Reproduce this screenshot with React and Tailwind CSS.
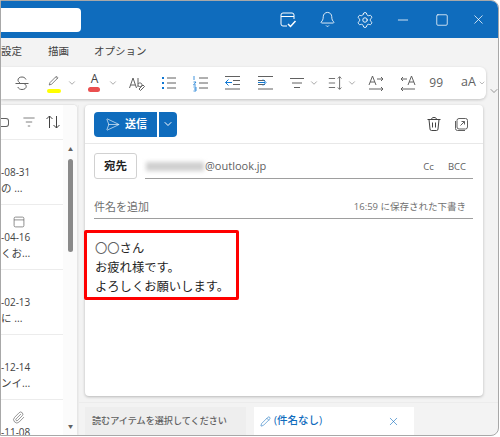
import { Bell, Settings, Minus, Square, X, ChevronDown, Paperclip, Pencil, SendHorizontal } from "lucide-react"

const Ico = ({ children, size = 20, color = "#616161", sw = 1 }) => (
  <svg width={size} height={size} viewBox="0 0 20 20" fill="none" stroke={color} strokeWidth={sw}>
    {children}
  </svg>
)

const Chev = () => <ChevronDown size={10} color="#757575" strokeWidth={1.5} />

const listItems = [
  { date: "-08-31", sub: "の ..." },
  { date: "-04-16", sub: "くお...", icon: "cal" },
  { date: "-02-13", sub: "に ..." },
  { date: "-12-14", sub: "ンイ..." },
  { date: "-11-08", icon: "clip" },
]

const Ribbon = () => (
  <div className="flex h-[32px] w-[485px] items-center rounded-r-md bg-white shadow-[0_1px_3px_rgba(0,0,0,0.2)]">
    <div className="ml-[11px] flex w-[20px] justify-center">
      <Ico>
        <path d="M14 6.5C13 4.5 11.5 4 10 4 7.5 4 6 5.3 6 7c0 1 .5 2 2 3M3.5 10.5h13M12 10.5c1.5.8 2.2 1.7 2.2 3 0 1.8-1.8 3-4.2 3-2 0-3.5-.8-4.2-2.5" />
      </Ico>
    </div>
    <div className="ml-[12px] flex w-[20px] flex-col items-center">
      <Ico size={16}>
        <path d="M5 12l-1 3 3-1 8-8-2-2zM12 5l2 2" />
      </Ico>
      <div className="h-[4px] w-[14px] rounded-sm bg-[#ffff00]" />
    </div>
    <div className="ml-[2px] flex w-[14px] justify-center"><Chev /></div>
    <div className="ml-[9px] flex w-[14px] flex-col items-center">
      <span className="text-[12px] leading-[12px] text-[#424242]">A</span>
      <div className="mt-[2px] h-[5px] w-[12px] rounded-sm bg-[#ea4f4f]" />
    </div>
    <div className="ml-[5px] flex w-[14px] justify-center"><Chev /></div>
    <div className="ml-[7px] flex w-[20px] justify-center">
      <Ico>
        <path d="M2.5 15L6 5l3.5 10M3.8 12h4.4M11 5v9M11 11c.5-1.5 4-1.5 4 .8 0 2-3 2.5-4 .7" />
        <path d="M12 16l4-4 1.5 1.5-4 4z" />
      </Ico>
    </div>
    <div className="ml-[12px] flex w-[20px] justify-center">
      <Ico>
        <path d="M8 5h9M8 10h9M8 15h9" stroke="#616161" />
        <path d="M3 5h2M3 10h2M3 15h2" stroke="#0f78d4" strokeWidth="2" />
      </Ico>
    </div>
    <div className="ml-[12px] flex w-[20px] justify-center">
      <Ico>
        <path d="M8 5h9M8 10h9M8 15h9" />
        <path d="M3 3v4M2.5 9h2.5l-2.5 3h2.5M2.5 14h2.5v4h-2.5M3 16h2" stroke="#0f78d4" strokeWidth=".8" />
      </Ico>
    </div>
    <div className="ml-[12px] flex w-[20px] justify-center">
      <Ico>
        <path d="M2 3.5h15M10 7.5h7M10 11.5h7M2 16h15" />
        <path d="M9 9.5H2.5M5.5 6.5l-3 3 3 3" stroke="#0f78d4" />
      </Ico>
    </div>
    <div className="ml-[12px] flex w-[20px] justify-center">
      <Ico>
        <path d="M3 3.5h15M3 7.5h7M3 11.5h7M3 16h15" />
        <path d="M3 9.5h7M8 6.5l3 3-3 3" stroke="#0f78d4" />
      </Ico>
    </div>
    <div className="ml-[12px] flex w-[20px] justify-center">
      <Ico>
        <path d="M3 5.5h14M5 10h10M7 14.5h6" />
      </Ico>
    </div>
    <div className="ml-[1px] flex w-[14px] justify-center"><Chev /></div>
    <div className="ml-[6px] flex w-[18px] justify-center">
      <Ico>
        <path d="M2 5h7M2 10h7M2 15h7M14 3v14M12 5l2-2 2 2M12 15l2 2 2-2" />
      </Ico>
    </div>
    <div className="flex w-[14px] justify-center"><Chev /></div>
    <div className="ml-[7px] flex w-[20px] justify-center">
      <Ico>
        <path d="M3 12l3.5-9L10 12M4.2 9h4.6M11 6h6M15 4l2 2-2 2M3 16h14M15 14l2 2-2 2" />
      </Ico>
    </div>
    <div className="ml-[12px] flex w-[20px] justify-center">
      <Ico>
        <path d="M10 12l3.5-9 3.5 9M11.2 9h4.6M3 6h6M5 4L3 6l2 2M3 16h14M5 14l-2 2 2 2" />
      </Ico>
    </div>
    <div className="ml-[9px] flex w-[20px] justify-center text-[12px] text-[#616161]">99</div>
    <div className="ml-[13px] flex w-[20px] justify-center text-[12.5px] text-[#616161]">aA</div>
    <div className="flex w-[8px] justify-center"><Chev /></div>
  </div>
)

const App = () => {
  return (
    <div className="relative flex h-[436px] w-[499px] flex-col overflow-hidden rounded-r-lg border border-[#a8a8a8] bg-[#f3f3f3] font-['Open_Sans','Noto_Sans_CJK_JP',sans-serif]">
      <div className="flex h-[37px] shrink-0 items-center bg-[#0f6cbd]">
        <div className="h-[24px] w-[80px] rounded-r bg-white" />
        <div className="ml-[197px] flex items-center">
          <svg width="20" height="20" viewBox="0 0 20 20" fill="none" stroke="#fff" strokeWidth="1">
            <path d="M9 16H5a2 2 0 0 1-2-2V5a2 2 0 0 1 2-2h9a2 2 0 0 1 2 2v4M3 6.5h13" />
            <path d="M10 14l2.5 2.5L17.5 11" strokeWidth="1.5" />
          </svg>
          <div className="ml-[21px]"><Bell size={17} color="#fff" strokeWidth={1.2} /></div>
          <div className="ml-[20px]"><Settings size={18} color="#fff" strokeWidth={1.2} /></div>
          <div className="ml-[21px]"><Minus size={16} color="#fff" strokeWidth={1.2} /></div>
          <div className="ml-[24px]"><Square size={14} color="#fff" strokeWidth={1.3} /></div>
          <div className="ml-[22px]"><X size={15} color="#fff" strokeWidth={1.2} /></div>
        </div>
      </div>

      <div className="flex h-[28px] shrink-0 items-center text-[10.5px] text-[#424242]">
        <span>設定</span>
        <span className="ml-[26px]">描画</span>
        <span className="ml-[25px]">オプション</span>
      </div>

      <div className="flex h-[33px] shrink-0 items-center">
        <Ribbon />
        <div className="ml-[2px] mt-[16px]"><ChevronDown size={12} color="#616161" strokeWidth={1.3} /></div>
      </div>

      <div className="mt-[6px] flex min-h-0 flex-1">
        <div className="flex w-[76px] shrink-0 overflow-hidden rounded-tr bg-white shadow-[0_0_2px_rgba(0,0,0,0.2)]">
          <div className="w-[62px] shrink-0">
            <div className="flex h-[35px] items-center border-b border-[#ececec]">
              <div className="h-[9px] w-[8px] shrink-0 rounded-r-[3px] border border-l-0 border-[#616161]" />
              <div className="ml-[12px]">
                <Ico size={16}><path d="M3 5h14M6 10h8M8.5 15h3" /></Ico>
              </div>
              <div className="ml-[8px]">
                <svg width="16" height="16" viewBox="0 0 16 16" fill="none" stroke="#424242" strokeWidth="1">
                  <path d="M4.5 14V2M1.5 5l3-3 3 3M11.5 2v12M8.5 11l3 3 3-3" />
                </svg>
              </div>
            </div>
            {listItems.map((item, index) => (
              <div key={index} className="h-[65px] shrink-0 border-b border-[#ececec]">
                <div className="flex h-[24px] items-end pl-[11px]">
                  {item.icon === "cal" && (
                    <Ico size={14}><rect x="3" y="3" width="14" height="14" rx="2" /><path d="M3 7h14" /></Ico>
                  )}
                  {item.icon === "clip" && <Paperclip size={13} color="#616161" strokeWidth={1.2} />}
                </div>
                <div className="h-[16px] text-[10px] leading-[16px] text-[#424242]">{item.date}</div>
                {item.sub && <div className="h-[16px] text-[10.5px] leading-[16px] text-[#424242]">{item.sub}</div>}
              </div>
            ))}
          </div>
          <div className="flex flex-1 flex-col items-center bg-[#fbfbfb] pl-[1px]">
            <div className="mt-[41px] text-[5px] leading-[6px] text-[#616161]">▲</div>
            <div className="mt-[7px] h-[93px] w-[5px] rounded-full bg-[#8a8a8a]" />
            <div className="mt-auto mb-[6px] text-[5px] leading-[6px] text-[#616161]">▼</div>
          </div>
        </div>

        <div className="ml-[1px] flex min-w-0 flex-1 flex-col border-l border-[#ececec]">
          <div className="flex h-[297px] flex-col pl-[6px] pr-[15px]">
            <div className="flex h-[291px] flex-col rounded bg-white shadow-[0_1px_3px_rgba(0,0,0,0.25)]">
              <div className="flex h-[39px] shrink-0 items-center border-b border-[#e8e8e8] pl-[9px] pr-[14px]">
                <div className="flex h-[25px] w-[63px] items-center rounded-l bg-[#0f6cbd] pl-[11px]">
                  <SendHorizontal size={15} color="#fff" strokeWidth={1} />
                  <span className="ml-[5px] text-[11px] font-bold text-white">送信</span>
                </div>
                <div className="ml-[2px] flex h-[25px] w-[18px] items-center justify-center rounded-r bg-[#0f6cbd]">
                  <ChevronDown size={12} color="#fff" strokeWidth={2} />
                </div>
                <div className="ml-auto flex items-center">
                  <svg width="16" height="16" viewBox="0 0 16 16" fill="none" stroke="#424242" strokeWidth="1">
                    <path d="M1.5 3.5h13M5.5 3.5C5.5 2 6.5 1.5 8 1.5s2.500.5 2.500 2M3 3.500l1 9.500a1.500 1.500 0 0 0 1.500 1.500h5a1.500 1.500 0 0 0 1.500-1.500l1-9.500M6.500 6.500v5M9.500 6.500v5" />
                  </svg>
                  <svg className="ml-[12px]" width="15" height="15" viewBox="0 0 15 15" fill="none" stroke="#616161" strokeWidth="1">
                    <rect x="3" y="1.5" width="10.5" height="10.5" rx="2" />
                    <path d="M1.5 4v7.5a2 2 0 0 0 2 2H11M6.5 8.5L10.5 4.5M7.5 4.5h3v3" />
                  </svg>
                </div>
              </div>

              <div className="flex pl-[9px] pr-[10px] pt-[9px]">
                <div className="flex h-[26px] w-[43px] shrink-0 items-center justify-center rounded-[3px] border border-[#d1d1d1] text-[11.5px] font-bold text-[#242424]">宛先</div>
                <div className="ml-[8px] flex h-[26px] flex-1 items-center border-b border-[#9e9e9e] pl-[1px] pt-[1px]">
                  <div className="mr-[1px] h-[9px] w-[58px] bg-[#cfcfcf] blur-[2px]" />
                  <span className="text-[11px] text-[#616161]">@outlook.jp</span>
                  <span className="ml-auto pt-[3px] text-[9.5px] text-[#616161]">Cc</span>
                  <span className="ml-[14px] mr-[7px] pt-[3px] text-[9.5px] text-[#616161]">BCC</span>
                </div>
              </div>

              <div className="mx-[9px] mr-[10px] mt-[17px] flex h-[23px] items-center border-b border-[#9e9e9e]">
                <span className="text-[11px] text-[#707070]">件名を追加</span>
                <span className="ml-auto mr-[7px] text-[9.5px] text-[#707070]">16:59 に保存された下書き</span>
              </div>

              <div className="pl-[10px] pt-[20px] text-[12.3px] leading-[19px] text-[#242424]">
                <p><span className="text-[#616161]">〇〇</span>さん</p>
                <p>お疲れ様です。</p>
                <p>よろしくお願いします。</p>
              </div>
            </div>
          </div>
          <div className="flex flex-1 gap-[8px] border-t border-[#ececec] pl-[6px] pt-[4px]">
            <div className="flex w-[161px] items-center bg-[#eeeeee] pl-[7px] text-[9.1px] font-medium text-[#616161]">読むアイテムを選択してください</div>
            <div className="flex w-[160px] items-center bg-white pl-[6px] text-[10.5px] font-medium text-[#0f6cbd]">
              <Pencil size={11} color="#0f6cbd" strokeWidth={1.2} />
              <span className="ml-[3px]">(件名なし)</span>
              <X className="ml-[65px]" size={13} color="#0f6cbd" strokeWidth={1.1} />
            </div>
          </div>
        </div>
      </div>

      <div className="absolute left-[83px] top-[229px] h-[70px] w-[155px] rounded-[2px] border-[3px] border-[#ff0000]" />
    </div>
  )
}

export default App
